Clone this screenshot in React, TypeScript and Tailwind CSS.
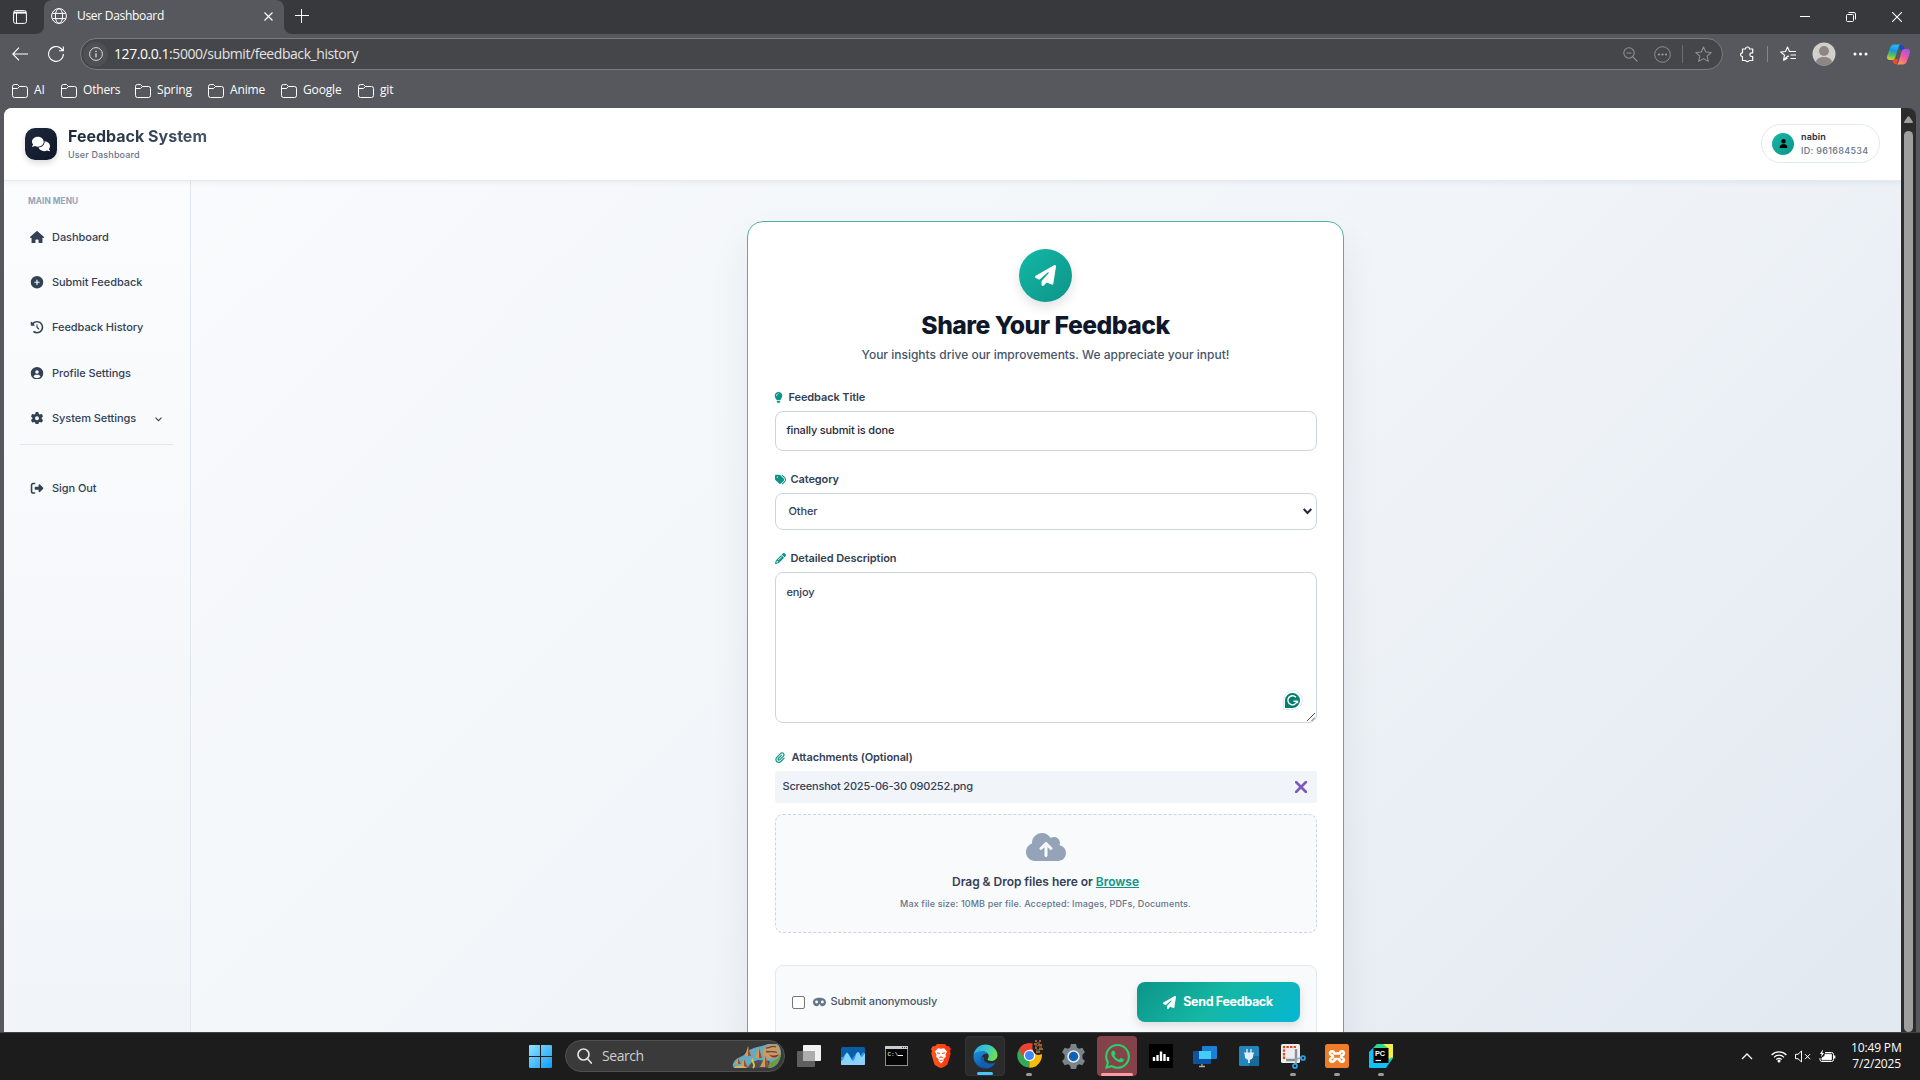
import React from "react";
import {
  FaHouse,
  FaCirclePlus,
  FaClockRotateLeft,
  FaCircleUser,
  FaGear,
  FaRightFromBracket,
  FaComments,
  FaUser,
  FaPaperPlane,
  FaLightbulb,
  FaTags,
  FaPencil,
  FaPaperclip,
  FaCloudArrowUp,
  FaMask,
} from "react-icons/fa6";

const Tab = () => (
  <div className="flex h-[34px] shrink-0 bg-[#38393d]">
    <div className="flex w-[44px] items-center pl-[13px]">
      <svg width="14" height="14" viewBox="0 0 14 14" fill="none" stroke="#fff">
        <rect x="0.6" y="0.6" width="12.8" height="12.8" rx="2" />
        <path d="M3.500 3v10" />
        <path d="M1 1.6h12v2H1z" fill="#fff" stroke="none" />
      </svg>
    </div>
    <div className="relative flex w-[240px] items-center rounded-t-[8px] bg-[#57585d] pt-0 pr-[11px] pl-[7px]">
      <svg className="absolute bottom-0 -left-[8px]" width="8" height="8">
        <path d="M8 0v8H0a8 8 0 0 0 8-8z" fill="#57585d" />
      </svg>
      <svg className="absolute -right-[8px] bottom-0" width="8" height="8">
        <path d="M0 0v8h8a8 8 0 0 1-8-8z" fill="#57585d" />
      </svg>
      <svg className="-mt-[2px]" width="16" height="16" viewBox="0 0 16 16" fill="none" stroke="#fff" strokeWidth="1">
        <circle cx="8" cy="8" r="7.4" />
        <ellipse cx="8" cy="8" rx="3.6" ry="7.4" />
        <path d="M1.4 5.4h13.2M1.4 10.6h13.2" />
      </svg>
      <span className="mt-[-3px] ml-[10px] flex-1 text-[12px] tracking-[-0.3px] text-white">User Dashboard</span>
      <svg width="9" height="9" viewBox="0 0 9 9" stroke="#fff" strokeWidth="1.1" className="-mt-[1px]">
        <path d="M.5.5l8 8M8.500.5l-8 8" />
      </svg>
    </div>
    <svg className="mt-[9px] ml-[11px]" width="14" height="14" viewBox="0 0 14 14" stroke="#fff">
      <path d="M6.500 0v14M0 6.500h14" />
    </svg>
    <div className="flex flex-1 items-center justify-end gap-[36px] pr-[18px]">
      <svg width="10" height="10" stroke="#fff">
        <path d="M0 4.500h10" />
      </svg>
      <svg width="10" height="10" viewBox="0 0 10 10" fill="none" stroke="#fff">
        <rect x=".5" y="2.500" width="7" height="7" rx="1" />
        <path d="M2.500.500h5.500a1.500 1.500 0 0 1 1.500 1.500v5.500" />
      </svg>
      <svg width="10" height="10" viewBox="0 0 10 10" stroke="#fff" strokeWidth="1.1">
        <path d="M0 0l10 10M10 0L0 10" />
      </svg>
    </div>
  </div>
);

const star = "M8 .9l2.100 4.700 5.100.5-3.800 3.400 1.100 5L8 11.900l-4.500 2.600 1.100-5L.8 6.100l5.100-.5z";

const CopilotLogo = () => (
  <svg width="23" height="21" viewBox="0 0 23 21">
    <defs>
      <linearGradient id="cpA" x1="0.3" y1="0" x2="0.1" y2="1">
        <stop offset="0" stopColor="#22b8f5" />
        <stop offset=".35" stopColor="#1698e0" />
        <stop offset=".65" stopColor="#59c05b" />
        <stop offset="1" stopColor="#f3cf2c" />
      </linearGradient>
      <linearGradient id="cpB" x1="0.8" y1="0" x2="0.2" y2="1">
        <stop offset="0" stopColor="#a653ea" />
        <stop offset=".5" stopColor="#ee5a9d" />
        <stop offset="1" stopColor="#fb9a56" />
      </linearGradient>
    </defs>
    <path d="M12 1h2.500c1.700 0 2.300 1.800 2.800 3.600l.5 1.400h-5z" fill="#1b49c8" />
    <path d="M6 15h5l-1 5H8.300C6.500 20 6 18 5.500 16z" fill="#f04a2e" />
    <path d="M7 .500h6.500c-1.500.5-2 2-2.500 4L8.500 13c-.6 2-1.500 3-3.500 3H3c-2.500 0-3.500-1.800-2.700-4.500L3 4C3.800 1.700 5 .5 7 .5z" fill="url(#cpA)" />
    <path d="M16 20.500H9.500c1.500-.5 2-2 2.500-4L14.500 8c.6-2 1.500-3 3.500-3h2c2.500 0 3.500 1.800 2.700 4.500L20 17c-.8 2.300-2 3.500-4 3.500z" fill="url(#cpB)" />
  </svg>
);

const AddressBar = () => (
  <div className="flex h-[40px] shrink-0 items-center bg-[#57585d]">
    <svg className="ml-[12px]" width="16" height="14" viewBox="0 0 16 14" fill="none" stroke="#fff" strokeWidth="1.1">
      <path d="M16 7H.8M7 .700L.8 7 7 13.300" />
    </svg>
    <svg className="ml-[20px]" width="16" height="16" viewBox="0 0 16 16" fill="none" stroke="#fff" strokeWidth="1.100">
      <path d="M15.400 8A7.400 7.400 0 1 1 13 2.500l2 2M15.300.500v4.300h-4.300" />
    </svg>
    <div className="ml-[16px] flex h-[32px] w-[1643px] items-center rounded-full border border-[#7b7c80] bg-[#454649] pr-[10px] pl-[2px]">
      <div className="flex h-[25px] w-[25px] items-center justify-center rounded-full bg-[#4f5054]">
        <svg width="14" height="14" viewBox="0 0 14 14" fill="none" stroke="#ddd">
          <circle cx="7" cy="7" r="6.400" />
          <path d="M7 6.200v4M7 3.700v1.300" strokeWidth="1.300" />
        </svg>
      </div>
      <span className="mt-[-1px] ml-[6px] flex-1 text-[14px] tracking-[-0.44px] text-[#e3e3e3]">
        <span className="text-white">127.0.0.1</span>:5000/submit/feedback_history
      </span>
      <svg width="15" height="15" viewBox="0 0 15 15" fill="none" stroke="#8f9093" strokeWidth="1.100">
        <circle cx="6" cy="6" r="5.200" />
        <path d="M3.500 6h5M9.800 9.800l4.700 4.700" />
      </svg>
      <svg className="ml-[16px]" width="17" height="17" viewBox="0 0 17 17" fill="none" stroke="#8f9093">
        <circle cx="8.500" cy="8.500" r="7.800" />
        <g fill="#a5a6a8" stroke="none">
          <circle cx="5" cy="8.500" r="1" />
          <circle cx="8.500" cy="8.500" r="1" />
          <circle cx="12" cy="8.500" r="1" />
        </g>
      </svg>
      <div className="ml-[11px] h-[18px] w-px bg-[#6d6e72]" />
      <svg className="ml-[12px]" width="17" height="17" viewBox="0 0 16 16" fill="none" stroke="#8f9093">
        <path d={star} strokeLinejoin="round" />
      </svg>
    </div>
    <svg className="ml-[16px]" width="17" height="17" viewBox="0 0 17 17" fill="none" stroke="#fff" strokeWidth="1.200" strokeLinejoin="round">
      <path d="M3.500 3h3a2 2 0 0 1 4 0h3.200v3.800h-1a1.800 1.800 0 0 0 0 3.700h1v4h-3.500a2 2 0 0 1-3.600 0H3.500V10.500H3a1.900 1.900 0 0 1 0-3.700h.5z" />
    </svg>
    <div className="ml-[11px] h-[16px] w-px bg-[#85868a]" />
    <svg className="ml-[12px]" width="17" height="16" viewBox="0 0 17 16" fill="none" stroke="#fff" strokeWidth="1.100">
      <path d="M9 10.500l-1-.500-4.500 4 1-4.800L.7 6l4.800-.5L7.500 1l2 4.500H16M10.500 9H16M10.500 12.500H16M3.500 14.500L7.500 12" strokeLinejoin="round" />
    </svg>
    <svg className="ml-[15px]" width="24" height="24" viewBox="0 0 24 24">
      <defs>
        <clipPath id="av">
          <circle cx="12" cy="12" r="11.500" />
        </clipPath>
      </defs>
      <circle cx="12" cy="12" r="11.500" fill="#d3d0cc" />
      <g clipPath="url(#av)" fill="#8d8783">
        <circle cx="12" cy="9" r="5" />
        <ellipse cx="12" cy="20" rx="8" ry="5" />
      </g>
    </svg>
    <svg className="ml-[17px]" width="15" height="4" fill="#fff">
      <circle cx="2" cy="2" r="1.500" />
      <circle cx="7.500" cy="2" r="1.500" />
      <circle cx="13" cy="2" r="1.500" />
    </svg>
    <div className="ml-[19px]">
      <CopilotLogo />
    </div>
  </div>
);

const bookmarks = [
  { name: "AI", w: "w-[49px]" },
  { name: "Others", w: "w-[74px]" },
  { name: "Spring", w: "w-[73px]" },
  { name: "Anime", w: "w-[73px]" },
  { name: "Google", w: "w-[77px]" },
  { name: "git", w: "w-[60px]" },
];

const Bookmarks = () => (
  <div className="flex h-[34px] shrink-0 items-center bg-[#57585d] pl-[12px]">
    {bookmarks.map((b) => (
      <div key={b.name} className={`flex items-center ${b.w}`}>
        <svg width="16" height="14" viewBox="0 0 16 14" fill="none" stroke="#fff">
          <path d="M.5 2.500a2 2 0 0 1 2-2h3l2 2h6a2 2 0 0 1 2 2v7a2 2 0 0 1-2 2h-11a2 2 0 0 1-2-2zM.5 4.500h5l2-2" />
        </svg>
        <span className="mt-[-2px] ml-[6px] text-[12px] tracking-[-0.15px] text-white">{b.name}</span>
      </div>
    ))}
  </div>
);

const Header = () => (
  <header className="relative z-10 flex h-[73px] shrink-0 items-center border-b border-[#e7ebf0] bg-white pr-[21px] pl-[21px] shadow-[0_1px_6px_rgba(15,23,42,0.07)]">
    <div className="flex h-[32px] w-[32px] items-center justify-center rounded-[10px] bg-linear-to-br from-[#1e293b] to-[#0f172a] shadow-[0_3px_6px_rgba(0,0,0,0.14)]">
      <FaComments className="text-[18px] text-white" />
    </div>
    <div className="mt-[-2px] ml-[11px]">
      <div className="h-[20px] bg-linear-to-r from-[#1e293b] to-[#475569] bg-clip-text text-[16px] leading-[20px] font-bold text-transparent">
        Feedback System
      </div>
      <div className="mt-[3px] h-[12px] text-[9px] leading-[12px] font-medium tracking-[0.15px] text-[#64748b]">User Dashboard</div>
    </div>
    <div className="mt-[-1px] ml-auto flex h-[39px] w-[119px] items-center rounded-full border border-[#e2e8f0] bg-white pl-[10px]">
      <div className="flex h-[22px] w-[22px] items-center justify-center rounded-full bg-linear-to-br from-[#14b8a6] to-[#0d9488]">
        <FaUser className="text-[9px] text-black" />
      </div>
      <div className="ml-[7px] leading-[14px]">
        <div className="text-[9px] font-semibold tracking-[0.15px] text-[#1e293b]">nabin</div>
        <div className="text-[9px] font-medium tracking-[0.3px] text-[#64748b]">ID: 961684534</div>
      </div>
    </div>
  </header>
);

const navItems = [
  { label: "Dashboard", Icon: FaHouse },
  { label: "Submit Feedback", Icon: FaCirclePlus },
  { label: "Feedback History", Icon: FaClockRotateLeft },
  { label: "Profile Settings", Icon: FaCircleUser },
  { label: "System Settings", Icon: FaGear, chevron: true },
];

const Sidebar = () => (
  <aside className="flex w-[187px] shrink-0 flex-col border-r border-[#e2e8f0] bg-linear-to-b from-[#fbfcfd] to-[#f1f5f9] pt-[13px] pl-[16px]">
    <div className="h-[14px] pl-[8px] text-[8.300px] leading-[15px] font-bold tracking-[0.05px] text-[#94a3b8]">MAIN MENU</div>
    <nav className="mt-[6.400px]">
      {navItems.map(({ label, Icon, chevron }) => (
        <div key={label} className="flex h-[45.300px] items-center pl-[10px] text-[11px] font-medium text-[#334155]">
          <Icon className="w-[14px] text-[12.500px]" />
          <span className="ml-[8px] tracking-[-0.06px]">{label}</span>
          {chevron && (
            <svg className="mt-[2px] ml-[19px]" width="7" height="5" viewBox="0 0 7 5" fill="none" stroke="#334155" strokeWidth="1.100">
              <path d="M.5.700l3 3 3-3" />
            </svg>
          )}
        </div>
      ))}
    </nav>
    <div className="mt-[3px] h-px w-[154px] bg-[#e2e8f0]" />
    <div className="mt-[33px] flex h-[20px] items-center pl-[10px] text-[11px] font-medium text-[#334155]">
      <FaRightFromBracket className="w-[14px] text-[12.500px]" />
      <span className="ml-[8px] tracking-[-0.06px]">Sign Out</span>
    </div>
  </aside>
);

const Label = ({ icon, children }: { icon: React.ReactNode; children: React.ReactNode }) => (
  <div className="flex h-[16px] items-center text-[11px] leading-[16px] font-semibold tracking-[-0.1px] text-[#334155]">
    <span className="text-[#0d9488]">{icon}</span>
    {children}
  </div>
);

const FeedbackCard = () => (
  <div className="mr-[2px] h-[900px] w-[597px] shrink-0 rounded-[16px] border border-[#55aea5] bg-white pt-[27px] pr-[26px] pl-[27px] shadow-[0_20px_40px_rgba(15,23,42,0.07)]">
    <div className="mx-auto flex h-[53px] w-[53px] items-center justify-center rounded-full bg-linear-to-br from-[#14b8a6] to-[#0d9488] shadow-[0_5px_12px_rgba(0,0,0,0.12)]">
      <FaPaperPlane className="text-[21px] text-white" />
    </div>
    <h1 className="mt-[8px] h-[32px] text-center text-[24.700px] leading-[31px] font-extrabold tracking-[-0.5px] text-[#0f172a]">
      Share Your Feedback
    </h1>
    <p className="mt-[4px] h-[18px] text-center text-[12px] leading-[17px] font-medium text-[#475569]">
      Your insights drive our improvements. We appreciate your input!
    </p>

    <div className="mt-[25px]">
      <Label icon={<FaLightbulb className="mr-[6px] ml-[-1px] w-[9px] text-[11px]" />}>Feedback Title</Label>
    </div>
    <div className="mt-[6px] flex h-[40px] items-center rounded-[8px] border border-[#cbd5e1] pb-px pl-[11px] text-[11px] font-medium tracking-[-0.17px] text-[#1e293b]">
      finally submit is done
    </div>

    <div className="mt-[20px]">
      <Label icon={<FaTags className="mr-[5px] text-[11px]" />}>Category</Label>
    </div>
    <div className="mt-[6px] flex h-[37px] items-center justify-between rounded-[8px] border border-[#cbd5e1] pr-[4px] pl-[13px] text-[11px] font-medium tracking-[-0.1px] text-[#334155]">
      Other
      <svg width="9" height="7" viewBox="0 0 9 7" fill="none" stroke="#1e293b" strokeWidth="2">
        <path d="M.7 1l3.800 4L8.300 1" />
      </svg>
    </div>

    <div className="mt-[20px]">
      <Label icon={<FaPencil className="mr-[5px] text-[11px]" />}>Detailed Description</Label>
    </div>
    <div className="relative mt-[6px] h-[151px] rounded-[8px] border border-[#cbd5e1] pt-[10px] pl-[11px] text-[11px] leading-[18px] font-medium tracking-[-0.15px] text-[#334155]">
      enjoy
      <div className="absolute right-[13px] bottom-[12px] flex h-[20px] w-[20px] items-center justify-center rounded-full rounded-bl-none border border-[#e2e8f0] bg-white">
        <svg width="15" height="15" viewBox="0 0 15 15" fill="none">
          <path d="M7.500 0A7.500 7.500 0 1 1 7.500 15H0V7.500A7.500 7.500 0 0 1 7.500 0z" fill="#027e6f" />
          <path d="M11 4.300A4.600 4.600 0 1 0 12 8.200H8.500M9.800 8.200h2.700v2" stroke="#fff" strokeWidth="1.400" />
        </svg>
      </div>
      <svg className="absolute right-px bottom-px" width="8" height="8" stroke="#555" strokeWidth="1">
        <path d="M0 8L8 0M4.500 8L8 4.500" />
      </svg>
    </div>

    <div className="mt-[26px]">
      <Label icon={<FaPaperclip className="mr-[7px] w-[10px] text-[11px]" />}>Attachments (Optional)</Label>
    </div>
    <div className="mt-[6px] flex h-[32px] items-center justify-between rounded-[3px] bg-[#f1f5f9] pr-[10px] pl-[8px] text-[11px] font-medium text-[#334155]">
      <span className="mt-[-2px] tracking-[-0.19px]">Screenshot 2025-06-30 090252.png</span>
      <svg width="12" height="12" viewBox="0 0 12 12" stroke="#7e5bb9" strokeWidth="2.600">
        <path d="M1 1l10 10M11 1L1 11" strokeLinecap="round" />
      </svg>
    </div>
    <div className="mt-[11px] flex h-[119px] flex-col items-center rounded-[8px] border border-dashed border-[#cbd5e1] bg-[#f8fafc] pt-[16px]">
      <FaCloudArrowUp className="h-[32px] w-[40px] text-[#94a3b8]" />
      <div className="mt-[10px] h-[18px] text-[12px] leading-[18px] font-semibold tracking-[-0.03px] text-[#334155]">
        Drag &amp; Drop files here or <span className="text-[#0d9488] underline">Browse</span>
      </div>
      <div className="mt-[6px] h-[14px] text-[9px] leading-[14px] font-medium tracking-[0.14px] text-[#64748b]">
        Max file size: 10MB per file. Accepted: Images, PDFs, Documents.
      </div>
    </div>

    <div className="mt-[32px] flex h-[74px] items-center rounded-[8px] border border-[#e2e8f0] bg-[#f8fafc] px-[16px]">
      <div className="h-[13px] w-[13px] rounded-[2px] border border-[#767676] bg-white" />
      <FaMask className="ml-[8px] w-[13px] text-[12px] text-[#64748b]" />
      <span className="mt-[-2px] ml-[5px] text-[11px] font-medium tracking-[-0.2px] text-[#475569]">Submit anonymously</span>
      <div className="ml-auto flex h-[40px] w-[163px] items-center justify-center rounded-[8px] bg-[linear-gradient(135deg,#0d9488_0%,#14b8a6_50%,#06b6d4_100%)] text-[12.500px] font-bold tracking-[-0.33px] text-white shadow-[0_4px_10px_rgba(0,0,0,0.12)]">
        <FaPaperPlane className="mr-[7px] text-[13px]" />
        Send Feedback
      </div>
    </div>
  </div>
);

const Page = () => (
  <div className="flex min-h-0 flex-1 bg-[#57585d] pr-[4px] pl-[4px]">
    <div className="flex w-[1897px] flex-col overflow-hidden rounded-tl-[8px] bg-white font-['Inter',sans-serif]">
      <Header />
      <div className="flex min-h-0 flex-1">
        <Sidebar />
        <main className="flex flex-1 items-start justify-center bg-[linear-gradient(135deg,#f8fafc_0%,#f1f5f9_50%,#e2e8f0_100%)] pt-[40px]">
          <FeedbackCard />
        </main>
      </div>
    </div>
    <div className="flex w-[15px] flex-col items-center rounded-tr-[8px] bg-[#2c2c2c] pt-[8px]">
      <svg width="9" height="7" fill="#9f9f9f">
        <path d="M3.500.800Q4.500-.3 5.500.8L9 6q0 1-1 1H1Q0 7 0 6z" />
      </svg>
      <div className="mt-[8px] w-[9px] flex-1 rounded-full bg-[#9f9f9f]" />
    </div>
  </div>
);

/* Taskbar icons */

const StartIcon = () => (
  <svg width="23" height="23" viewBox="0 0 23 23">
    <defs>
      <linearGradient id="win" x1="0" y1="0" x2="1" y2="1">
        <stop offset="0" stopColor="#8fe3ff" />
        <stop offset="1" stopColor="#0f9bf5" />
      </linearGradient>
    </defs>
    <path d="M1 0h10v11H0V1a1 1 0 0 1 1-1zM12 0h10a1 1 0 0 1 1 1v10H12zM0 12h11v11H1a1 1 0 0 1-1-1zM12 12h11v10a1 1 0 0 1-1 1H12z" fill="url(#win)" />
  </svg>
);

const SearchArt = () => (
  <svg width="50" height="26" viewBox="0 0 50 26">
    <path d="M1 21C3 15 9 14 12 12c4-6 12-8 18-9l6-2h9c3 2 4 6 4 10-1 8-5 13-11 14H6c-4 0-6-1-5-4z" fill="#69a9bd" />
    <path d="M36 25c8-1 13-8 13-15l-4 6-10 5z" fill="#6f9c37" />
    <path d="M15 25l5-6 6-2 12 1-2 7z" fill="#4c5157" />
    <path d="M21 16c-3 2 4 5 0 9" stroke="#e9c23f" strokeWidth="1.800" fill="none" />
    <path d="M31 7c2-4 6-6 11-5.500 5 .5 7 5 6 9-2 4-6 5.500-10 5-4 0-9-2-7-8.500z" fill="#c89a66" />
    <path d="M34 5c4 0 6-3 10-1M34 8.500c4 1 7-1 11 1" stroke="#70442e" strokeWidth="1.300" fill="none" />
    <path d="M37 11c2 2 6 2 10 0-1 4-8 5-10 0z" fill="#8f2f22" />
    <path d="M13 13l3-10 3 10zM3 21l3-6 3 6zM8 25l4-9 4 9zM23 15l4-10 3 10zM28 24l5-11 4 11z" fill="#d19a62" />
    <path d="M16 3l3 10h-3zM6 15l3 6H6zM12 16l4 9h-4zM27 5l3 10h-3zM33 13l4 11h-4z" fill="#8b5735" />
    <path d="M1 25c4-3 11-3 14 0z" fill="#d8b163" />
  </svg>
);

const TaskViewIcon = () => (
  <svg width="24" height="24" viewBox="0 0 24 24">
    <rect x="6" y="1" width="18" height="16" rx="1" fill="#f2f2f2" />
    <rect x="0" y="7" width="18" height="16" rx="1" fill="#5f5f5f" />
    <rect x="6" y="7" width="12" height="10" fill="#adadad" />
  </svg>
);

const MonitorIcon = () => (
  <svg width="24" height="20" viewBox="0 0 24 20">
    <rect y="1" width="24" height="18" rx="1.500" fill="#0a5ea8" />
    <path d="M0 11h2l4-5 5 7 5-7 3 4 3-4 2 2v10.500H0z" fill="#2a9be4" />
    <path d="M0 15c3 0 4-8 6-8s4 8 6 8 3-9 5-9 2 5 4 5l3-4v11a1 1 0 0 1-1 1H1a1 1 0 0 1-1-1z" fill="#8ad2fb" />
  </svg>
);

const CmdIcon = () => (
  <svg className="-ml-px" width="23" height="20" viewBox="0 0 23 20">
    <rect x=".5" y=".5" width="22" height="19" fill="#060606" stroke="#8c8f92" />
    <path d="M0 0h23v3H0z" fill="#c6cbd0" />
    <path d="M17 1.500h1M19 1.500h1M21 1.500h1" stroke="#444" />
    <text x="2.500" y="10" fontSize="6" fontFamily="Liberation Mono, monospace" fill="#fff">C:\</text>
    <path d="M13 9.500h5" stroke="#fff" />
  </svg>
);

const BraveIcon = () => (
  <svg width="20" height="24" viewBox="0 0 20 24">
    <defs>
      <linearGradient id="brv">
        <stop offset="0" stopColor="#ff5a1f" />
        <stop offset="1" stopColor="#f5330c" />
      </linearGradient>
    </defs>
    <path d="M6 0h8l2 2.300 2-.3 2 3-1 2 .7 2.500-3 10.500c-.3 1-4 3.200-6.700 4-2.700-.8-6.400-3-6.700-4L.3 9.500 1 7 0 5l2-3 2 .3z" fill="url(#brv)" />
    <path d="M7 4.200l3 .5 3-.5 3 3.300-1.500 3.200.4 2-2.600 2.600.3 1.500L10 19.500l-2.600-2.700.3-1.500-2.600-2.600.4-2L4 7.500z" fill="#fff" />
    <path d="M6 8.800l3 .7M14 8.800l-3 .7M8.300 13.800L10 12.800l1.700 1M8.500 16.200h3" stroke="#fb4a18" strokeWidth="1.100" fill="none" />
  </svg>
);

const EdgeIcon = () => (
  <svg width="25" height="25" viewBox="0 0 25 25">
    <defs>
      <linearGradient id="eg1" x1="0" y1="0.200" x2="1" y2="0.500">
        <stop offset="0" stopColor="#2fa9e8" />
        <stop offset=".5" stopColor="#35c6cf" />
        <stop offset="1" stopColor="#6ee04f" />
      </linearGradient>
      <linearGradient id="eg2" x1="0" y1="0" x2="0.600" y2="1">
        <stop offset="0" stopColor="#1c90dc" />
        <stop offset="1" stopColor="#0c4fa6" />
      </linearGradient>
    </defs>
    <path d="M.5 11.500C1.200 5 6.300.5 12.500.5 19.500.5 24.500 6 24.500 11c0 3.500-2.700 6-6 6-2.500 0-4-.8-4-1.700 0-.7 1.200-1.200 1.200-3.300 0-2.700-2.700-4.500-6-4.500C5.500 7.500 2 9 .5 11.500z" fill="url(#eg1)" />
    <path d="M.5 12C1.200 9 4.500 7.200 8.500 7.200c3.500 0 6 1.500 6.800 3.300-2-1.500-6-.5-6.800 3-.8 4 3 8 7 8 2.500 0 5-1 6.500-2.500-2 3.500-5.500 5.500-9.500 5.500C5.500 24.500.2 18.500.5 12z" fill="url(#eg2)" />
    <path d="M8.700 13.500c-2 4 1 9 5 10.900 4-.4 7.400-2.800 9.100-6.100-3 1.800-8 1.700-10.800-.8-1.300-1.200-1.800-3-1-4.500-1 0-1.800.1-2.300.5z" fill="#125fae" />
  </svg>
);

const ChromeIcon = () => (
  <svg width="28" height="30" viewBox="0 0 28 30">
    <g transform="translate(0 4)">
      <path d="M12.500 12.500L2 6.400A12 12 0 0 1 23 6.500z" fill="#ea4335" />
      <path d="M12.500 12.500V24.500A12 12 0 0 1 2 6.400z" fill="#34a853" />
      <path d="M12.500 12.500L23 6.500A12 12 0 0 1 12.300 24.500z" fill="#fbbc04" />
      <path d="M2 6.400l5 8.700 5.500-8.600H23A12 12 0 0 0 2 6.400z" fill="#ea4335" />
      <path d="M18 15.500l-5.700 9A12 12 0 0 0 23 6.500H12.500z" fill="#fbbc04" />
      <circle cx="12.500" cy="12.500" r="5.700" fill="#fff" />
      <circle cx="12.500" cy="12.500" r="4.500" fill="#4285f4" />
    </g>
    <ellipse cx="21.500" cy="8" rx="6.200" ry="8" fill="#241d1a" />
    <path d="M18 2h2M22 2h2M17 5h3M21 6h4M18 9h2M22 10h4M19 13h4" stroke="#d0713f" strokeWidth="1.500" />
    <path d="M20 4h3M18 7h3M22 8h3M19 11h4" stroke="#5c9460" strokeWidth="1.200" />
  </svg>
);

const SettingsIcon = () => (
  <svg width="25" height="25" viewBox="0 0 24 24">
    <path d="M9.500 0h5l.8 3.300 2 1.200 3.200-1L23 7.800l-2.400 2.400v3.600L23 16.200l-2.500 4.300-3.200-1-2 1.200-.8 3.300h-5l-.8-3.300-2-1.200-3.200 1L1 16.200l2.400-2.400v-3.600L1 7.800l2.500-4.300 3.200 1 2-1.200z" fill="#7b838b" />
    <circle cx="12" cy="12" r="6" fill="#e6e9ec" />
    <circle cx="12" cy="12" r="4.500" fill="#0e62b3" />
  </svg>
);

const WhatsAppIcon = () => (
  <svg width="25" height="25" viewBox="0 0 24 24">
    <path
      fill="#27d366"
      d="M17.472 14.382c-.297-.149-1.758-.867-2.030-.967-.273-.099-.471-.148-.670.150-.197.297-.767.966-.940 1.164-.173.199-.347.223-.644.075-.297-.150-1.255-.463-2.390-1.475-.883-.788-1.480-1.761-1.653-2.059-.173-.297-.018-.458.130-.606.134-.133.298-.347.446-.520.149-.174.198-.298.298-.497.099-.198.050-.371-.025-.520-.075-.149-.669-1.612-.916-2.207-.242-.579-.487-.500-.669-.510-.173-.008-.371-.010-.570-.010-.198 0-.520.074-.792.372-.272.297-1.040 1.016-1.040 2.479 0 1.462 1.065 2.875 1.213 3.074.149.198 2.096 3.200 5.077 4.487.709.306 1.262.489 1.694.625.712.227 1.360.195 1.871.118.571-.085 1.758-.719 2.006-1.413.248-.694.248-1.289.173-1.413-.074-.124-.272-.198-.570-.347m-5.421 7.403h-.004a9.870 9.870 0 0 1-5.031-1.378l-.361-.214-3.741.982.998-3.648-.235-.374a9.860 9.860 0 0 1-1.510-5.260c.001-5.450 4.436-9.884 9.888-9.884 2.640 0 5.122 1.030 6.988 2.898a9.825 9.825 0 0 1 2.893 6.994c-.003 5.450-4.437 9.884-9.885 9.884m8.413-18.297A11.815 11.815 0 0 0 12.050 0C5.495 0 .160 5.335.157 11.892c0 2.096.547 4.142 1.588 5.945L.057 24l6.305-1.654a11.882 11.882 0 0 0 5.683 1.448h.005c6.554 0 11.890-5.335 11.893-11.893a11.821 11.821 0 0 0-3.480-8.413z"
    />
  </svg>
);

const EqualizerIcon = () => (
  <svg width="24" height="24" viewBox="0 0 24 24">
    <rect width="24" height="24" fill="#000" />
    <path d="M5 17v-4M8.500 17v-6M12 17V7.500M15.500 17v-7M19 17v-4" stroke="#fff" strokeWidth="2.400" />
  </svg>
);

const RemoteIcon = () => (
  <svg width="24" height="22" viewBox="0 0 24 22">
    <rect x="9" y="0" width="15" height="13" rx="1" fill="#1e80d5" />
    <rect x="0" y="5" width="18" height="13" rx="1" fill="#0d539f" />
    <path d="M6 5h12v8H6z" fill="#42ccf6" />
    <path d="M9 18v3M6 20.500h6" stroke="#aaa" strokeWidth="1.300" />
  </svg>
);

const PlugIcon = () => (
  <svg width="20" height="20" viewBox="0 0 20 20">
    <rect width="20" height="20" rx="1.500" fill="#2286bd" />
    <path d="M10 10h10v9a1 1 0 0 1-1 1h-9z" fill="#176a9c" />
    <path d="M5 6.500h10v1.300h-.8V10a4 4 0 0 1-3.300 3.800V17H9.100v-3.200A4 4 0 0 1 5.800 10V7.800H5z" fill="#e2eef5" />
    <path d="M8 3v4M12 3v4" stroke="#e2eef5" strokeWidth="1.300" />
  </svg>
);

const SnipIcon = () => (
  <svg width="25" height="25" viewBox="0 0 25 25">
    <rect x="0" y="0" width="19" height="19" rx="1.500" fill="#ececec" />
    <path d="M3 15V3h12" stroke="#d9491e" strokeWidth="2.200" strokeDasharray="2.400 1.200" fill="none" />
    <path d="M15 5v11H5" stroke="#8a8f94" strokeWidth="2.400" fill="none" />
    <path d="M14 15.500l7-2M15.500 14.500l-1 6" stroke="#9da3a8" strokeWidth="1.800" />
    <circle cx="22" cy="14" r="2" fill="none" stroke="#2da4ea" strokeWidth="1.700" />
    <circle cx="14" cy="22" r="2" fill="none" stroke="#2da4ea" strokeWidth="1.700" />
  </svg>
);

const XamppIcon = () => (
  <svg width="24" height="24" viewBox="0 0 24 24">
    <rect width="24" height="24" rx="2.500" fill="#f07c27" />
    <path
      d="M9.200 9.500c-.5-3.500-4.700-2.500-4.200 0 .3 2 3 1.500 3 3s-3 1.200-3 3.500c.3 2.700 4.700 2.200 4.700-1h4.600c0 3.200 4.400 3.700 4.700 1 0-2.300-3-2-3-3.500s2.700-1 3-3c.5-2.500-3.700-3.500-4.200 0z"
      fill="none"
      stroke="#fff"
      strokeWidth="2.500"
      strokeLinejoin="round"
    />
  </svg>
);

const PyCharmIcon = () => (
  <svg width="24" height="24" viewBox="0 0 24 24">
    <path d="M8 0h15a1 1 0 0 1 1 1v13l-7 10H1a1 1 0 0 1-1-1V8z" fill="#0fc1f4" />
    <path d="M8 0h15a1 1 0 0 1 1 1v13l-5 4V4H5z" fill="#29d98c" />
    <path d="M14 0h9a1 1 0 0 1 1 1v12l-5 2V4z" fill="#f3ee4e" />
    <rect x="4.500" y="4" width="15" height="15" fill="#000" />
    <text x="6" y="11.800" fontSize="7.300" fontWeight="700" fontFamily="Liberation Sans, sans-serif" fill="#fff">PC</text>
    <path d="M6.500 16.500h5.500" stroke="#fff" strokeWidth="1.200" />
  </svg>
);

const apps = [
  { Icon: TaskViewIcon },
  { Icon: MonitorIcon },
  { Icon: CmdIcon },
  { Icon: BraveIcon },
  { Icon: EdgeIcon, box: "bg-[#2b2b2b] border border-[#343434]", bar: "w-[16px] bg-[#4cc2ff]" },
  { Icon: ChromeIcon, bar: "w-[6px] bg-[#9a9a9a]", shift: "-mt-[5px] ml-[3px]" },
  { Icon: SettingsIcon },
  { Icon: WhatsAppIcon, box: "bg-[#84434a]", bar: "w-[32px] bg-[#ff99a4]" },
  { Icon: EqualizerIcon },
  { Icon: RemoteIcon, shift: "mt-[2px]" },
  { Icon: PlugIcon },
  { Icon: SnipIcon, bar: "w-[6px] bg-[#9a9a9a]" },
  { Icon: XamppIcon, bar: "w-[6px] bg-[#9a9a9a]" },
  { Icon: PyCharmIcon, bar: "w-[6px] bg-[#9a9a9a]" },
];

const Taskbar = () => (
  <div className="flex h-[48px] shrink-0 items-center border-t border-[#444] bg-[#1c1c1c] pb-px pl-[529px]">
    <StartIcon />
    <div className="ml-[13px] flex h-[32px] w-[220px] items-center rounded-full border border-[#505050] bg-[#3a3a3a] pr-[2px] pl-[11px]">
      <svg width="15" height="16" viewBox="0 0 15 16" fill="none" stroke="#e0e0e0" strokeWidth="1.700">
        <circle cx="6.500" cy="6.500" r="5.500" />
        <path d="M10.300 10.500l4 4.500" strokeLinecap="round" />
      </svg>
      <span className="mt-[-1px] ml-[10px] flex-1 text-[14px] tracking-[-0.45px] text-[#cfcfcf]">Search</span>
      <SearchArt />
    </div>
    <div className="ml-[2px] flex">
      {apps.map(({ Icon, box, bar, shift }, i) => (
        <div key={i} className="flex w-[44px] justify-center">
          <div className={`relative flex h-[40px] w-[40px] items-center justify-center rounded-[4px] ${box ?? ""}`}>
            <div className={shift ?? ""}>
              <Icon />
            </div>
            {bar && (
              <div className="absolute inset-x-0 bottom-0 flex justify-center">
                <div className={`h-[3px] rounded-full ${bar}`} />
              </div>
            )}
          </div>
        </div>
      ))}
    </div>
    <div className="flex flex-1 items-center justify-end pr-[19px]">
      <svg width="12" height="7" viewBox="0 0 12 7" fill="none" stroke="#fff" strokeWidth="1.300">
        <path d="M1 6l5-5 5 5" />
      </svg>
      <svg className="ml-[18px]" width="16" height="13" viewBox="0 0 16 13" fill="none" stroke="#fff" strokeWidth="1.200">
        <path d="M.6 5a10.500 10.500 0 0 1 14.800 0M3 7.300a7 7 0 0 1 10 0M5.300 9.500a4 4 0 0 1 5.400 0" />
        <circle cx="8" cy="11" r="1.500" fill="#fff" stroke="none" />
      </svg>
      <svg className="ml-[8px]" width="16" height="13" viewBox="0 0 16 13" fill="none" stroke="#fff">
        <path d="M.5 4.300H3L6.500 1v11L3 8.700H.5z" strokeLinejoin="round" />
        <path d="M10 4.200l5 5M15 4.200l-5 5" />
      </svg>
      <svg className="ml-[8px]" width="17" height="13" viewBox="0 0 17 13" fill="none" stroke="#fff">
        <path d="M6 2.500h6.500a2 2 0 0 1 2 2v5a2 2 0 0 1-2 2H3a2 2 0 0 1-2-2V8" />
        <path d="M6 4.200h6.300v5.600H3V8l3-2z" fill="#fff" />
        <path d="M15.700 5.500v3" strokeWidth="1.300" />
        <path d="M3.500 0L1 4h1.700L2 7.200 5 3H3.300L4 0z" fill="#fff" stroke="none" />
      </svg>
      <div className="ml-[15px] w-[50px] text-right text-[12px] leading-[16px] tracking-[-0.15px] whitespace-nowrap text-white">
        <div>10:49 PM</div>
        <div>7/2/2025</div>
      </div>
    </div>
  </div>
);

export default function App() {
  return (
    <div className="flex h-[1080px] w-[1920px] flex-col overflow-hidden bg-[#57585d] font-['Open_Sans',sans-serif]">
      <Tab />
      <AddressBar />
      <Bookmarks />
      <Page />
      <Taskbar />
    </div>
  );
}
